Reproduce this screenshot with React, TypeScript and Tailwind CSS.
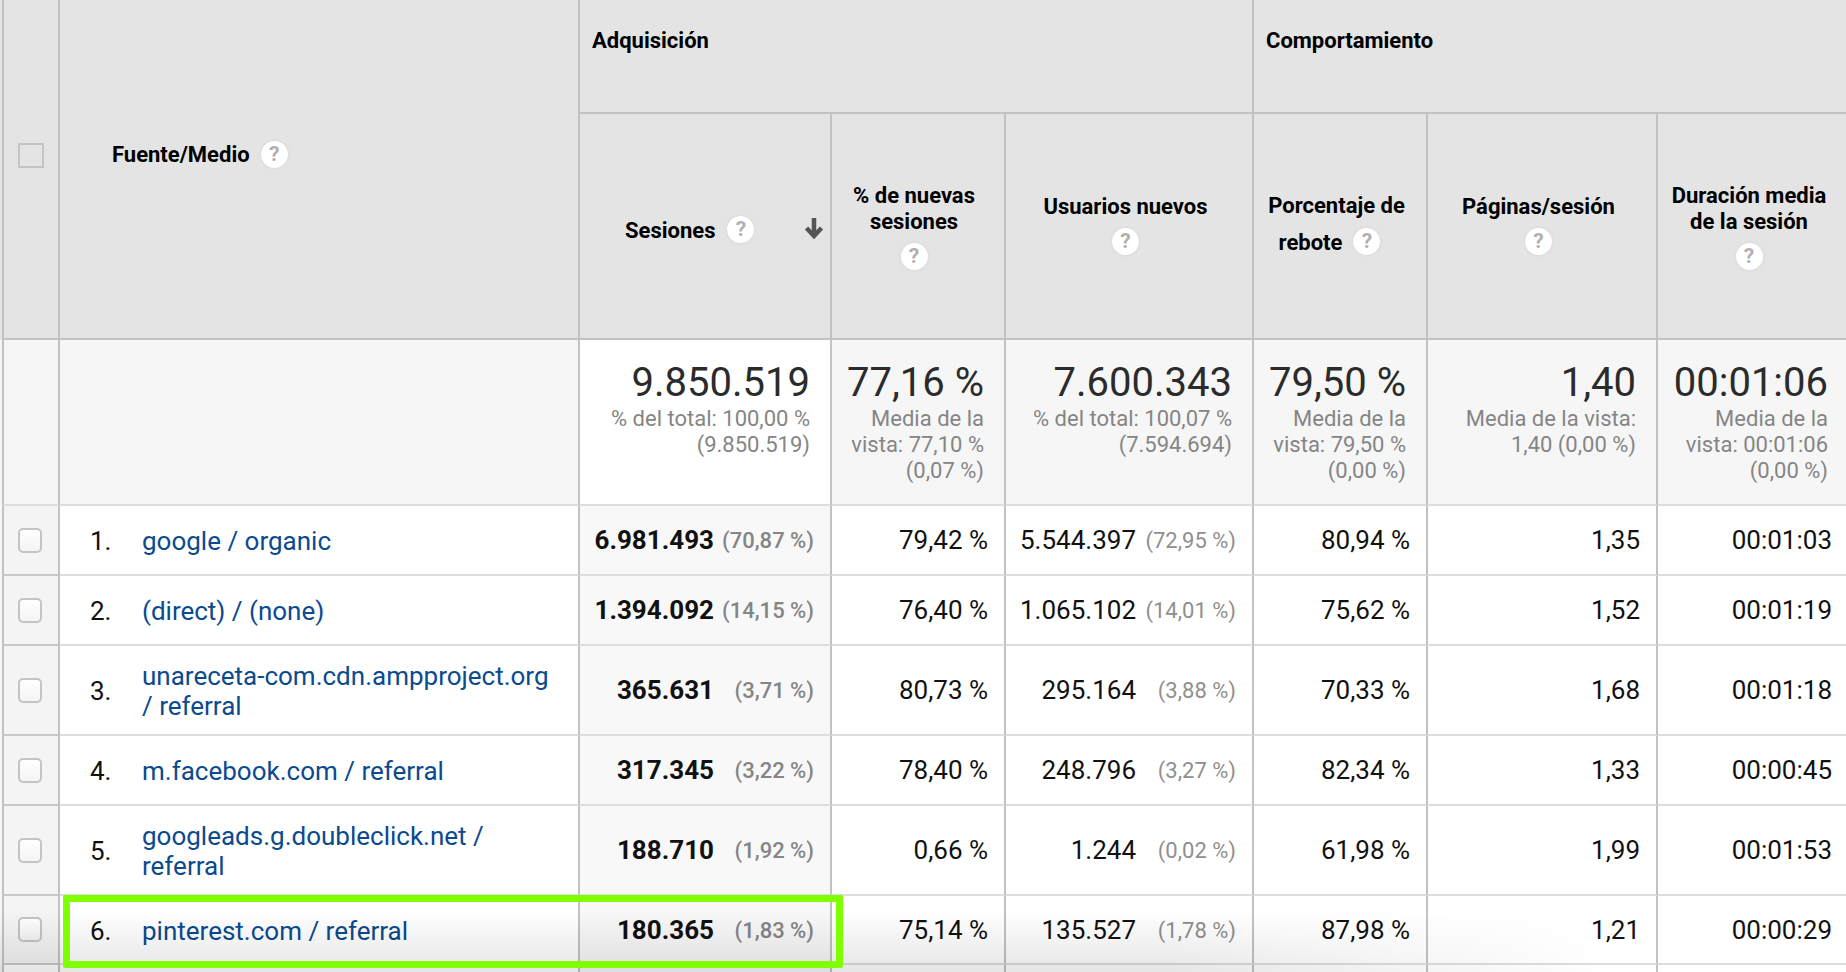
import React from "react";

const Help = ({ className = "" }: { className?: string }) => (
  <span className={`inline-flex h-[27px] w-[27px] shrink-0 items-center justify-center rounded-full bg-white text-[21px] font-bold leading-none text-[#b0b0b0] shadow-[0_0_3px_#cfcfcf] ${className}`}>?</span>
);

const Check = () => (
  <span className="mx-auto block h-[25px] w-[24px] rounded-[5px] border-2 border-[#c4c4c4] bg-gradient-to-b from-white to-[#f4f4f4]" />
);

type Row = {
  n: string; name: React.ReactNode; h: string; s: string; sp: string; pct: string; u: string; up: string; r: string; p: string; d: string;
};

const rows: Row[] = [
  { n: "1.", name: "google / organic", h: "h-[70px]", s: "6.981.493", sp: "(70,87 %)", pct: "79,42 %", u: "5.544.397", up: "(72,95 %)", r: "80,94 %", p: "1,35", d: "00:01:03" },
  { n: "2.", name: "(direct) / (none)", h: "h-[70px]", s: "1.394.092", sp: "(14,15 %)", pct: "76,40 %", u: "1.065.102", up: "(14,01 %)", r: "75,62 %", p: "1,52", d: "00:01:19" },
  { n: "3.", name: "unareceta-com.cdn.ampproject.org / referral", h: "h-[90px]", s: "365.631", sp: "(3,71 %)", pct: "80,73 %", u: "295.164", up: "(3,88 %)", r: "70,33 %", p: "1,68", d: "00:01:18" },
  { n: "4.", name: "m.facebook.com / referral", h: "h-[70px]", s: "317.345", sp: "(3,22 %)", pct: "78,40 %", u: "248.796", up: "(3,27 %)", r: "82,34 %", p: "1,33", d: "00:00:45" },
  { n: "5.", name: "googleads.g.doubleclick.net / referral", h: "h-[90px]", s: "188.710", sp: "(1,92 %)", pct: "0,66 %", u: "1.244", up: "(0,02 %)", r: "61,98 %", p: "1,99", d: "00:01:53" },
  { n: "6.", name: "pinterest.com / referral", h: "h-[69px]", s: "180.365", sp: "(1,83 %)", pct: "75,14 %", u: "135.527", up: "(1,78 %)", r: "87,98 %", p: "1,21", d: "00:00:29" },
];

const th = "border-r-2 border-b-2 border-[#c2c2c2] bg-[#e4e4e4] p-0 font-bold text-[22px] leading-[26px] text-black";
const tot = "border-r-2 border-b-2 border-r-[#c2c2c2] border-b-[#dedede] bg-[#f6f6f6] p-0 pt-[20px] pr-[20px] text-right align-top font-normal";
const td = "border-r-2 border-b-2 border-r-[#c2c2c2] border-b-[#dedede] p-0 pt-[1px] text-right text-[26px] text-[#111]";

const Total = ({ big, sub, white }: { big: string; sub: React.ReactNode; white?: boolean }) => (
  <td className={`${tot} ${white ? "bg-white" : ""}`}>
    <div className="text-[40px] leading-[46px] text-[#2b2b2b]">{big}</div>
    <div className="text-[22px] leading-[26px] text-[#858585]">{sub}</div>
  </td>
);

export default function App() {
  return (
    <div className="relative h-[972px] w-[1846px] overflow-hidden bg-[linear-gradient(#e4e4e4_340px,#f7f7f7_340px)] pl-[2px] font-['Roboto',sans-serif]">
      <table className="w-[1880px] table-fixed border-separate border-spacing-0">
        <colgroup>
          <col className="w-[58px]" />
          <col className="w-[520px]" />
          <col className="w-[252px]" />
          <col className="w-[174px]" />
          <col className="w-[248px]" />
          <col className="w-[174px]" />
          <col className="w-[230px]" />
          <col className="w-[224px]" />
        </colgroup>
        <thead>
          <tr className="h-[114px]">
            <th rowSpan={2} className={`${th} border-l-2 align-top`}>
              <span className="mt-[143px] ml-[14px] block h-[25px] w-[26px] border-2 border-[#c4c4c4]" />
            </th>
            <th rowSpan={2} className={`${th} align-top`}>
              <div className="mt-[142px] ml-[52px] flex items-center gap-[11px]">
                <span>Fuente/Medio</span>
                <Help className="-mt-[2px]" />
              </div>
            </th>
            <th colSpan={3} className={`${th} pb-[30px] pl-[12px] text-left`}>Adquisición</th>
            <th colSpan={3} className={`${th} border-r-0 pb-[30px] pl-[12px] text-left`}>Comportamiento</th>
          </tr>
          <tr className="h-[226px]">
            <th className={`${th} pt-[9px]`}>
              <div className="relative flex items-center pl-[45px]">
                <span>Sesiones</span>
                <Help className="ml-[12px] -mt-[2px]" />
                <svg viewBox="0 0 20 22" className="absolute right-[6px] -top-[1px] h-[22px] w-[20px]" fill="none" stroke="#555" strokeWidth="4.5">
                  <path d="M10 1v17M2.5 11l7.5 8 7.5-8" />
                </svg>
              </div>
            </th>
            <th className={`${th} pr-[8px]`}>
              <div>% de nuevas<br />sesiones</div>
              <Help className="mt-[8px]" />
            </th>
            <th className={`${th} pr-[7px] pb-[4px]`}>
              <div>Usuarios nuevos</div>
              <Help className="mt-[8px]" />
            </th>
            <th className={`${th} pr-[7px] pb-[4px]`}>
              <div>Porcentaje de</div>
              <div className="mt-[8px] flex items-center justify-center gap-[11px] pr-[14px]"><span className="pt-[3px]">rebote</span> <Help /></div>
            </th>
            <th className={`${th} pr-[7px] pb-[4px]`}>
              <div>Páginas/sesión</div>
              <Help className="mt-[8px]" />
            </th>
            <th className={`${th} border-r-0 pr-[40px]`}>
              <div>Duración media<br />de la sesión</div>
              <Help className="mt-[8px]" />
            </th>
          </tr>
        </thead>
        <tbody>
          <tr className="h-[166px]">
            <td className={`${tot} border-l-2 border-l-[#c2c2c2] border-b-[#c8c8c8]`} />
            <td className={`${tot} bg-[#f6f6f6]`} />
            <Total white big="9.850.519" sub={<>% del total: 100,00 %<br />(9.850.519)</>} />
            <Total big="77,16 %" sub={<>Media de la<br />vista: 77,10 %<br />(0,07 %)</>} />
            <Total big="7.600.343" sub={<>% del total: 100,07 %<br />(7.594.694)</>} />
            <Total big="79,50 %" sub={<>Media de la<br />vista: 79,50 %<br />(0,00 %)</>} />
            <Total big="1,40" sub={<>Media de la vista:<br />1,40 (0,00 %)</>} />
            <td className={`${tot} border-r-0 pr-[52px]`}>
              <div className="text-[40px] leading-[46px] text-[#2b2b2b]">00:01:06</div>
              <div className="text-[22px] leading-[26px] text-[#858585]">Media de la<br />vista: 00:01:06<br />(0,00 %)</div>
            </td>
          </tr>
          {rows.map((r) => (
            <tr key={r.n} className={r.h}>
              <td className="border-r-2 border-b-2 border-l-2 border-r-[#c2c2c2] border-b-[#c8c8c8] border-l-[#c2c2c2] bg-[#f4f4f4] p-0 pr-[3px]"><Check /></td>
              <td className="border-r-2 border-b-2 border-r-[#c2c2c2] border-b-[#dedede] bg-white p-0 pt-[2px]">
                <div className="flex items-center pr-[24px] text-[26px] leading-[30px]">
                  <span className="w-[82px] shrink-0 pl-[30px] text-[#111]">{r.n}</span>
                  <a className="text-[#0b4a8f]">{r.name}</a>
                </div>
              </td>
              <td className={`${td} bg-[#f8f8f8] pr-[16px]`}>
                <div className="flex items-center justify-end">
                  <span className="font-bold text-[#111]">{r.s}</span>
                  <span className="w-[100px] text-[22px] font-medium text-[#858585]">{r.sp}</span>
                </div>
              </td>
              <td className={`${td} bg-white pr-[16px]`}>{r.pct}</td>
              <td className={`${td} bg-white pr-[16px]`}>
                <div className="flex items-center justify-end">
                  <span>{r.u}</span>
                  <span className="w-[100px] text-[22px] text-[#8f8f8f]">{r.up}</span>
                </div>
              </td>
              <td className={`${td} bg-white pr-[16px]`}>{r.r}</td>
              <td className={`${td} bg-white pr-[16px]`}>{r.p}</td>
              <td className={`${td} border-r-0 bg-white pr-[48px]`}>{r.d}</td>
            </tr>
          ))}
          <tr className="h-[7px]">
            <td className="border-l-2 border-r-2 border-l-[#c2c2c2] border-r-[#c2c2c2] bg-white p-0" />
            <td className="border-r-2 border-r-[#c2c2c2] bg-white p-0" />
            <td className="border-r-2 border-r-[#c2c2c2] bg-[#f8f8f8] p-0" />
            <td className="border-r-2 border-r-[#c2c2c2] bg-white p-0" />
            <td className="border-r-2 border-r-[#c2c2c2] bg-white p-0" />
            <td className="border-r-2 border-r-[#c2c2c2] bg-white p-0" />
            <td className="border-r-2 border-r-[#c2c2c2] bg-white p-0" />
            <td className="bg-white p-0" />
          </tr>
        </tbody>
      </table>
      <div className="pointer-events-none absolute top-[910px] left-0 h-[62px] w-[1620px] bg-gradient-to-b from-transparent to-black/10 [mask-image:linear-gradient(to_right,black_72%,transparent)]" />
      <div className="pointer-events-none absolute top-[895px] left-[63px] h-[73px] w-[780px] rounded-[2px] border-[7px] border-[#7fff00]" />
    </div>
  );
}
